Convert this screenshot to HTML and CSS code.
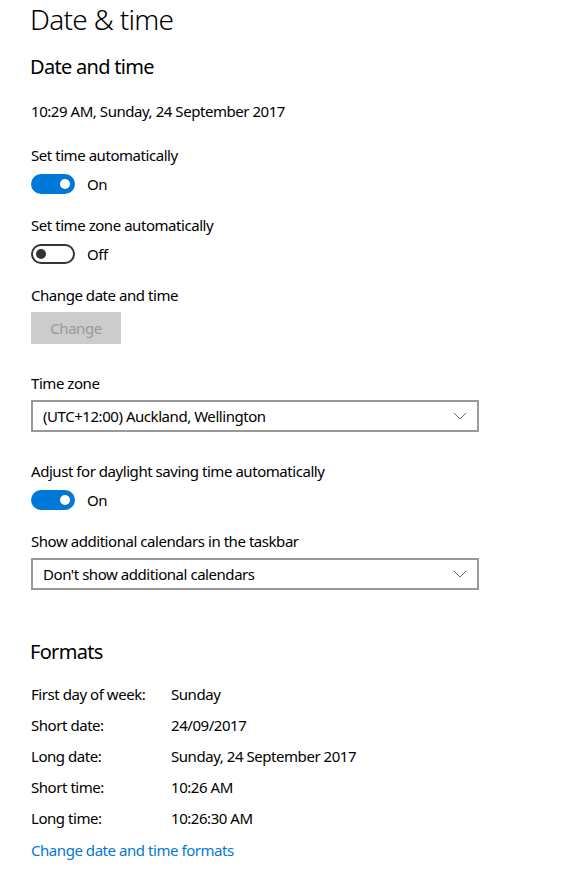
FILE: index.html
```html
<!DOCTYPE html>
<html lang="en">
<head>
<meta charset="utf-8">
<title>Date &amp; time</title>
<link rel="stylesheet" href="styles.css">
</head>
<body>
<main class="page">
  <h1 class="title">Date &amp; time</h1>
  <h2 class="section-title">Date and time</h2>
  <p class="current">10:29 AM, Sunday, 24 September 2017</p>

  <p class="label gap-24">Set time automatically</p>
  <div class="toggle-row">
    <span class="toggle on"><span class="knob"></span></span>
    <span class="toggle-text">On</span>
  </div>

  <p class="label gap-21">Set time zone automatically</p>
  <div class="toggle-row">
    <span class="toggle off"><span class="knob"></span></span>
    <span class="toggle-text">Off</span>
  </div>

  <p class="label gap-21">Change date and time</p>
  <button class="btn" disabled>Change</button>

  <p class="label gap-29">Time zone</p>
  <div class="select">
    <span class="select-text">(UTC+12:00) Auckland, Wellington</span>
    <svg class="chevron" width="14" height="8" viewBox="0 0 14 8"><polyline points="1,1 7,7 13,1" fill="none" stroke="#666" stroke-width="1"/></svg>
  </div>

  <p class="label gap-29">Adjust for daylight saving time automatically</p>
  <div class="toggle-row">
    <span class="toggle on"><span class="knob"></span></span>
    <span class="toggle-text">On</span>
  </div>

  <p class="label gap-21">Show additional calendars in the taskbar</p>
  <div class="select">
    <span class="select-text">Don't show additional calendars</span>
    <svg class="chevron" width="14" height="8" viewBox="0 0 14 8"><polyline points="1,1 7,7 13,1" fill="none" stroke="#666" stroke-width="1"/></svg>
  </div>

  <h2 class="section-title formats-title">Formats</h2>
  <dl class="formats">
    <dt>First day of week:</dt><dd>Sunday</dd>
    <dt>Short date:</dt><dd>24/09/2017</dd>
    <dt>Long date:</dt><dd>Sunday, 24 September 2017</dd>
    <dt>Short time:</dt><dd>10:26 AM</dd>
    <dt>Long time:</dt><dd>10:26:30 AM</dd>
  </dl>
  <a class="link" href="#">Change date and time formats</a>
</main>
</body>
</html>
```

FILE: styles.css
```css
html, body {
  margin: 0;
  padding: 0;
  background: #ffffff;
}

body {
  font-family: "Noto Sans", "Open Sans", "Liberation Sans", sans-serif;
  font-size: 15px;
  line-height: 20px;
  letter-spacing: -0.45px;
  color: #000;
}

.page {
  padding-left: 31px;
  display: flex;
  flex-direction: column;
  align-items: flex-start;
}

.title {
  margin: 0 0 0 -1px;
  font-size: 28px;
  line-height: 38px;
  font-weight: 300;
  letter-spacing: -0.7px;
}

.section-title {
  margin: 15px 0 0 -1px;
  font-size: 20px;
  line-height: 28px;
  font-weight: 400;
  letter-spacing: -0.7px;
}

.current {
  margin: 20px 0 0;
}

.label {
  margin: 0;
}

.gap-24 { margin-top: 24px; }
.gap-21 { margin-top: 21px; }
.gap-29 { margin-top: 29px; }

.toggle-row {
  margin-top: 9px;
  display: flex;
  align-items: center;
  gap: 12px;
  height: 20px;
}

.toggle {
  box-sizing: border-box;
  width: 44px;
  height: 20px;
  border-radius: 10px;
  display: flex;
  align-items: center;
  padding: 0 3px;
}

.toggle .knob {
  width: 10px;
  height: 10px;
  border-radius: 50%;
}

.toggle.on {
  background: #0078d7;
  justify-content: flex-end;
  padding-right: 5px;
}

.toggle.on .knob {
  background: #ffffff;
}

.toggle.off {
  border: 2px solid #333;
  justify-content: flex-start;
  padding-left: 3px;
}

.toggle.off .knob {
  background: #333;
}

.btn {
  margin-top: 7px;
  width: 90px;
  height: 32px;
  border: none;
  background: #cccccc;
  color: #999999;
  font-family: inherit;
  font-size: 15px;
  letter-spacing: -0.45px;
  padding: 0;
}

.select {
  margin-top: 7px;
  box-sizing: border-box;
  width: 448px;
  height: 32px;
  border: 2px solid #999999;
  display: flex;
  align-items: center;
  justify-content: space-between;
  padding: 0 10px 0 10px;
}

.chevron {
  display: block;
}

.formats-title {
  margin-top: 48px;
}

.formats {
  margin: 18px 0 0;
  display: grid;
  grid-template-columns: 140px auto;
  row-gap: 11px;
}

.formats dt, .formats dd {
  margin: 0;
}

.link {
  margin-top: 12px;
  color: #0078d7;
  text-decoration: none;
}
```
